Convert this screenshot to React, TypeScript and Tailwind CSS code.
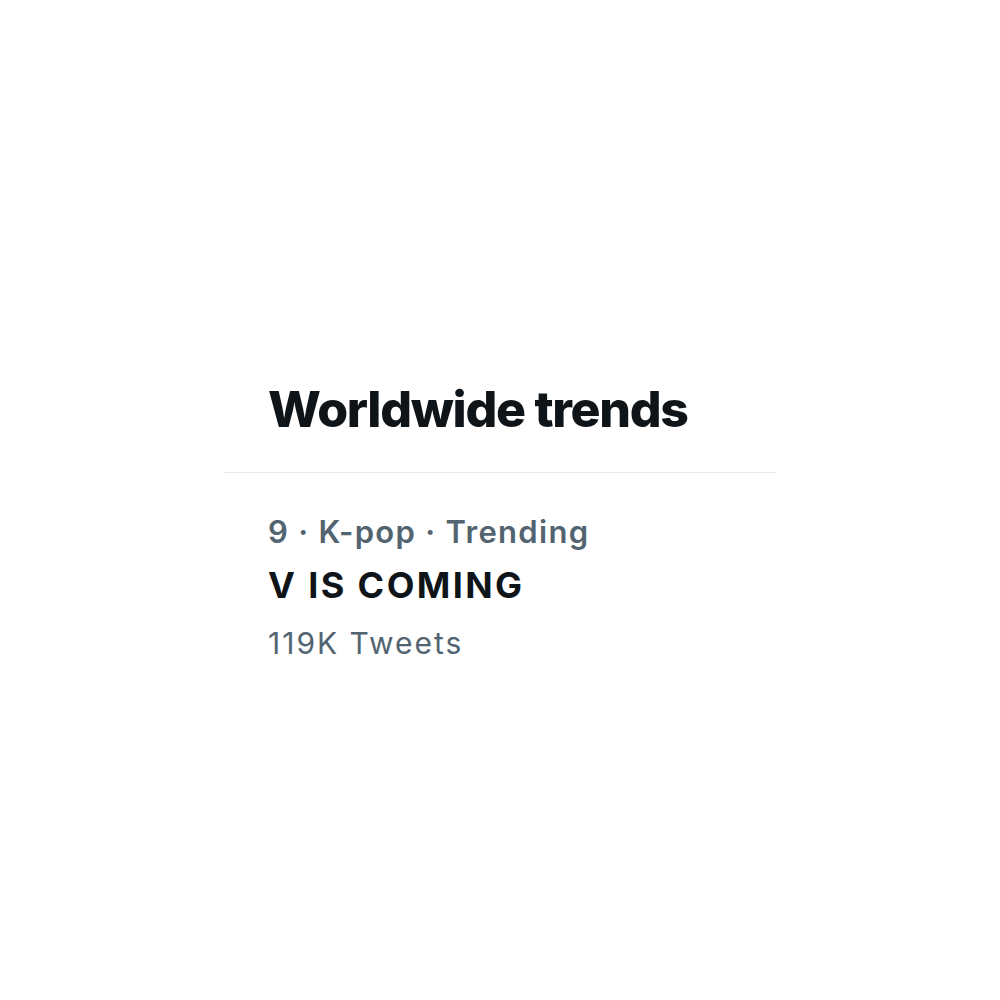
export default function App() {
  return (
    <div className="w-[1000px] h-[1000px] bg-white" style={{ fontFamily: 'Inter, "Liberation Sans", sans-serif' }}>
      <div className="pt-[379px] pl-[224px] w-[777px]">
        <h1 className="pl-[44px] text-[50px] leading-[60px] font-extrabold tracking-[-1.3px] text-[#0f1419]">
          Worldwide trends
        </h1>
        <div className="mt-[33px] h-px bg-[#e7e9ea]" />
        <div className="pl-[44px] mt-[41px]">
          <div className="text-[31px] leading-[36px] font-semibold tracking-[1.3px] text-[#536471]">
            9 · K-pop · Trending
          </div>
          <div className="mt-[14px] text-[36px] leading-[42px] font-bold tracking-[2.4px] text-[#0f1419]">
            V IS COMING
          </div>
          <div className="mt-[19px] text-[30px] leading-[36px] tracking-[2px] text-[#536471]">
            119K Tweets
          </div>
        </div>
      </div>
    </div>
  )
}
